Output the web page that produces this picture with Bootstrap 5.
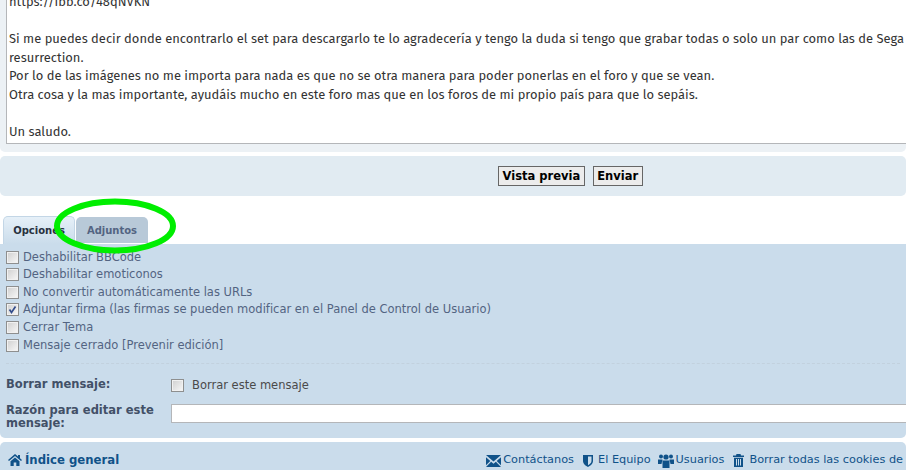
<!DOCTYPE html>
<html lang="es">
<head>
    <meta charset="UTF-8">
    <meta name="viewport" content="width=device-width, initial-scale=1.0">
    <title>Editar mensaje</title>
    <link href="https://cdn.jsdelivr.net/npm/bootstrap@5.3.0/dist/css/bootstrap.min.css" rel="stylesheet">
    <style>
        html, body { height: 470px; overflow: hidden; }
        body { background: #fff; font-family: "DejaVu Sans", Verdana, sans-serif; font-size: 11.5px; color: #536482; position: relative; width: 906px; }
        .editor-panel { background: #ecf1f5; height: 152px; padding: 0 0 8px 6px; overflow: hidden; border-radius: 0 0 5px 5px; display: flex; flex-direction: column; justify-content: flex-end; }
        .msg-box { background: #fff; border: 1px solid #b4b6b9; border-right: 0; height: 180px; flex: none; padding: 0 0 2px 2px; font-family: "Fira Sans", "Noto Sans", sans-serif; font-size: 12.93px; line-height: 18.5px; color: #333; white-space: pre; overflow: hidden; display: flex; flex-direction: column; justify-content: flex-end; }
        .submit-bar { background: #e1ebf2; height: 40px; margin-top: 4px; padding-left: 498px; gap: 8px; border-radius: 5px; }
        .sub-btn { background: #ececec; border: 1px solid #666; color: #000; font-family: "DejaVu Sans", Verdana, sans-serif; font-size: 11.5px; font-weight: 700; height: 20px; padding: 0 3.5px; line-height: 16px; }
        .tab-row { margin-top: 20px; padding-left: 3px; gap: 1px; height: 28px; }
        .tab-on, .tab-off { font-size: 10px; font-weight: 700; border-radius: 5px 5px 0 0; text-decoration: none; text-align: center; }
        .tab-on { width: 72px; color: #28313f; background: linear-gradient(#e6f0f8, #cadceb); border: 1px solid #c3d6e6; border-bottom: 0; padding-top: 6px; }
        .tab-off { width: 72px; height: 26px; margin-top: 1px; color: #536482; background: #b8c9d8; padding-top: 6px; }
        .opt-panel { background: #cadceb; height: 194px; padding: 4.4px 6px 0; border-radius: 0 0 5px 5px; }
        .opt-line { height: 17.6px; gap: 4px; white-space: nowrap; }
        .win-check { appearance: none; -webkit-appearance: none; width: 13px; height: 13px; margin: 0; flex: none; border: 1px solid #8e8f8f; background: linear-gradient(135deg, #cfcfcf, #f8f8f8); box-shadow: inset 0 0 0 1px #f1f1f1; }
        .win-check:checked { background: center/11px 11px no-repeat url("data:image/svg+xml,%3Csvg xmlns='http://www.w3.org/2000/svg' viewBox='0 0 11 11'%3E%3Cpath d='M2.500 5.500l2 3 4-6' fill='none' stroke='%23334d8c' stroke-width='1.700'/%3E%3C/svg%3E"), linear-gradient(135deg, #cfcfcf, #f8f8f8); }
        .dash-rule { border-top: 1px dashed #c2d1de; margin-top: 8.600px; height: 0; }
        .field-row { display: flex; }
        .field-gap-top { margin-top: 13px; }
        .field-gap-next { margin-top: 10px; }
        .field-name { width: 165px; flex: none; font-weight: 700; color: #425067; line-height: 13.5px; }
        .field-text { color: #4a4a4a; }
        .reason-input { flex: 1; height: 19px; background: #fff; border: 1px solid #b4b6b9; border-right: 0; margin-right: -6px; }
        .foot-bar { background: #cadceb; height: 37px; margin-top: 4px; padding: 0 0 0 8px; white-space: nowrap; color: #105289; border-radius: 5px 5px 0 0; }
        .foot-bar svg { fill: #105289; flex: none; }
        .foot-home { font-weight: 700; font-size: 11.7px; gap: 3px; }
        .foot-links { margin-left: 367px; gap: 9px; font-size: 11.3px; }
        .mail-link { gap: 2px; }
        .team-link { gap: 5px; }
        .users-link { gap: 2px; margin-left: -2px; }
        .green-ring { position: absolute; left: 50px; top: 196px; }
    </style>
</head>
<body>
    <div class="editor-panel">
        <div class="msg-box">https://ibb.co/48qNVKN

Si me puedes decir donde encontrarlo el set para descargarlo te lo agradecería y tengo la duda si tengo que grabar todas o solo un par como las de Sega
resurrection.
Por lo de las imágenes no me importa para nada es que no se otra manera para poder ponerlas en el foro y que se vean.
Otra cosa y la mas importante, ayudáis mucho en este foro mas que en los foros de mi propio país para que lo sepáis.

Un saludo.
</div>
    </div>

    <div class="submit-bar d-flex align-items-center">
        <button class="sub-btn">Vista previa</button>
        <button class="sub-btn">Enviar</button>
    </div>

    <div class="tab-row d-flex">
        <a class="tab-on" href="#">Opciones</a>
        <a class="tab-off" href="#">Adjuntos</a>
    </div>

    <div class="opt-panel">
        <div class="opt-line d-flex align-items-center"><input class="win-check" type="checkbox"><span>Deshabilitar BBCode</span></div>
        <div class="opt-line d-flex align-items-center"><input class="win-check" type="checkbox"><span>Deshabilitar emoticonos</span></div>
        <div class="opt-line d-flex align-items-center"><input class="win-check" type="checkbox"><span>No convertir automáticamente las URLs</span></div>
        <div class="opt-line d-flex align-items-center"><input class="win-check" type="checkbox" checked><span>Adjuntar firma (las firmas se pueden modificar en el Panel de Control de Usuario)</span></div>
        <div class="opt-line d-flex align-items-center"><input class="win-check" type="checkbox"><span>Cerrar Tema</span></div>
        <div class="opt-line d-flex align-items-center"><input class="win-check" type="checkbox"><span>Mensaje cerrado [Prevenir edición]</span></div>
        <div class="dash-rule"></div>
        <div class="field-row align-items-center field-gap-top">
            <div class="field-name">Borrar mensaje:</div>
            <div class="d-flex align-items-center gap-2"><input class="win-check" type="checkbox"><span class="field-text">Borrar este mensaje</span></div>
        </div>
        <div class="field-row field-gap-next">
            <div class="field-name">Razón para editar este mensaje:</div>
            <div class="reason-input"></div>
        </div>
    </div>

    <div class="foot-bar d-flex align-items-center">
        <div class="foot-home d-flex align-items-center">
            <svg width="14" height="12" viewBox="0 0 14 12"><path d="M7 0L0 6l1 1 6-5 6 5 1-1-2-1.700V1h-2v1.600zM2.500 7.200V12h3.200V8.500h2.600V12h3.200V7.200L7 3.400z"/></svg>
            <span>Índice general</span>
        </div>
        <div class="foot-links d-flex align-items-center">
            <div class="d-flex align-items-center mail-link"><svg width="15" height="12" viewBox="0 0 14 11"><path d="M0 0h14L7 6zM0 2l4 3.500L0 9.500zM14 2v7.500l-4-4zM4.800 6.200L7 8l2.200-1.800L14 11H0z"/></svg><span>Contáctanos</span></div>
            <div class="d-flex align-items-center team-link"><svg width="10" height="12" viewBox="0 0 10 12"><path fill-rule="evenodd" d="M0 0h10v6c0 3-3 5-5 6-2-1-5-3-5-6zM5 1.500h3.500V6c0 2-2 3.500-3.500 4.300z"/></svg><span>El Equipo</span></div>
            <div class="d-flex align-items-center users-link"><svg width="16" height="14" viewBox="0 0 16 14"><circle cx="3" cy="2.500" r="2"/><circle cx="13" cy="2.500" r="2"/><circle cx="8" cy="3" r="2.600"/><path d="M0 5.500h4.500L3.500 10H0zM11.500 5.500H16V10h-3.500zM4.500 6.500h7V14h-7z"/></svg><span>Usuarios</span></div>
            <div class="d-flex align-items-center team-link"><svg width="11" height="13" viewBox="0 0 11 13"><path fill-rule="evenodd" d="M3.500 0h4l.5 1.500h3V3H0V1.500h3zM1 3.800h9V13H1zM3 5v6.500h1V5zM5 5v6.500h1V5zM7 5v6.500h1V5z"/></svg><span>Borrar todas las cookies de</span></div>
        </div>
    </div>

    <svg class="green-ring" width="130" height="62" viewBox="0 0 130 62"><ellipse cx="65" cy="30" rx="58" ry="24.500" fill="none" stroke="#00ee00" stroke-width="6"/></svg>

    <script src="https://cdn.jsdelivr.net/npm/bootstrap@5.3.0/dist/js/bootstrap.bundle.min.js"></script>
</body>
</html>
